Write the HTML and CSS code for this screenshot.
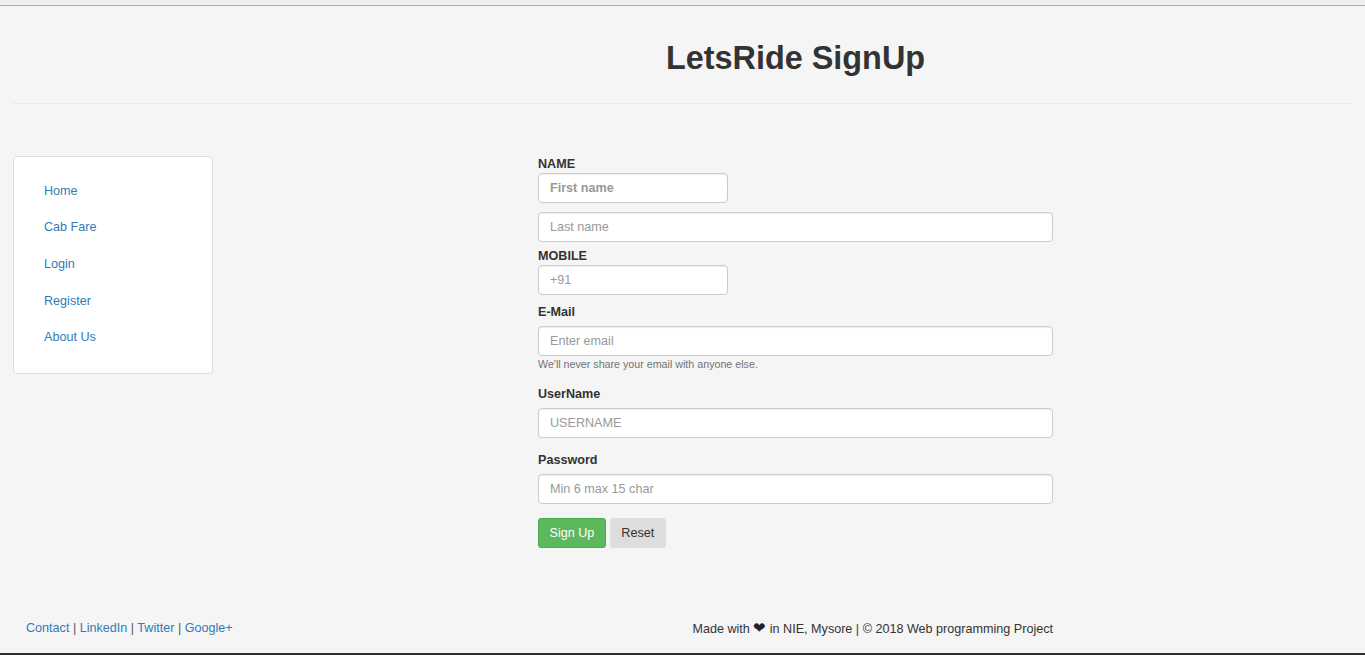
FILE: index.html
```html
<!DOCTYPE html>
<html lang="en">
<head>
<meta charset="utf-8">
<title>LetsRide SignUp</title>
<link rel="stylesheet" href="styles.css">
</head>
<body>
<div class="topbar"></div>
<div class="page">
  <header class="header">
    <div></div>
    <h1 class="title">LetsRide SignUp</h1>
  </header>
  <hr class="rule">
  <main class="main">
    <nav class="sidebar">
      <a class="nav-link" href="#">Home</a>
      <a class="nav-link" href="#">Cab Fare</a>
      <a class="nav-link" href="#">Login</a>
      <a class="nav-link" href="#">Register</a>
      <a class="nav-link" href="#">About Us</a>
    </nav>
    <form class="form">
      <label class="label">NAME</label>
      <input class="input input-short input-bold" type="text" placeholder="First name">
      <input class="input input-gap" type="text" placeholder="Last name">
      <label class="label label-mobile">MOBILE</label>
      <input class="input input-short" type="text" placeholder="+91">
      <label class="label label-email">E-Mail</label>
      <input class="input" type="email" placeholder="Enter email">
      <small class="help">We'll never share your email with anyone else.</small>
      <label class="label label-user">UserName</label>
      <input class="input" type="text" placeholder="USERNAME">
      <label class="label label-pass">Password</label>
      <input class="input" type="password" placeholder="Min 6 max 15 char">
      <div class="buttons">
        <button class="btn btn-success" type="submit">Sign Up</button>
        <button class="btn btn-default" type="reset">Reset</button>
      </div>
    </form>
  </main>
  <footer class="footer">
    <div class="footer-left"><a href="#">Contact</a> | <a href="#">LinkedIn</a> | <a href="#">Twitter</a> | <a href="#">Google+</a></div>
    <div class="footer-right">Made with <span class="heart">&#10084;</span> in NIE, Mysore | &copy; 2018 Web programming Project</div>
  </footer>
</div>
<div class="bottombar"></div>
</body>
</html>
```
FILE: styles.css
```css
* { box-sizing: border-box; }
html, body { margin: 0; padding: 0; }
body {
  background: #f5f5f5;
  font-family: "Liberation Sans", Arial, Helvetica, sans-serif;
  font-size: 12.6px;
  line-height: 20px;
  color: #333;
  height: 655px;
  overflow: hidden;
  display: flex;
  flex-direction: column;
}
.topbar {
  height: 6px;
  background: #f0f0f0;
  border-bottom: 1px solid #ababab;
  flex: none;
}
.page {
  flex: 1;
  display: flex;
  flex-direction: column;
}
.header {
  display: grid;
  grid-template-columns: 525px 515px;
  padding-left: 13px;
  height: 97px;
}
.title {
  margin: 0;
  padding-top: 34px;
  font-size: 32.4px;
  line-height: 36px;
  font-weight: bold;
  text-align: center;
  white-space: nowrap;
  color: #333;
}
.rule {
  margin: 0 13px 0 12px;
  border: 0;
  border-top: 1px solid #ebebeb;
  height: 0;
}
.main {
  display: grid;
  grid-template-columns: 200px 515px;
  column-gap: 325px;
  padding-left: 13px;
  align-items: start;
}
.sidebar {
  margin-top: 52px;
  background: #fff;
  border: 1px solid #ddd;
  border-radius: 4px;
  padding: 14.6px 15px 17.6px;
  display: flex;
  flex-direction: column;
}
.nav-link {
  display: block;
  padding: 11px 15px 9px;
  line-height: 16.7px;
  color: #337ab7;
  text-decoration: none;
}
.form {
  margin-top: 49px;
  display: flex;
  flex-direction: column;
  align-items: flex-start;
}
.label {
  display: block;
  font-weight: bold;
  padding-top: 2px;
  line-height: 18px;
}
.label-mobile { margin-top: 3px; }
.label-email { margin-top: 6px; margin-bottom: 5px; }
.label-user { margin-top: 10px; margin-bottom: 5px; }
.label-pass { margin-top: 11px; margin-bottom: 5px; }
.input {
  display: block;
  width: 515px;
  height: 30px;
  padding: 4px 11px;
  font-family: inherit;
  font-size: 12.6px;
  line-height: 20px;
  color: #555;
  background: #fff;
  border: 1px solid #ccc;
  border-radius: 4px;
  box-shadow: inset 0 1px 1px rgba(0,0,0,0.075);
}
.input::placeholder { color: #999; }
.input-short { width: 190px; }
.input-bold::placeholder { font-weight: bold; }
.input-gap { margin-top: 9px; }
.help {
  display: block;
  margin-top: 0;
  font-size: 10.7px;
  line-height: 17px;
  color: #737373;
}
.buttons {
  margin-top: 14px;
  display: flex;
  gap: 4px;
}
.btn {
  height: 30px;
  padding: 4px 10.5px;
  font-family: inherit;
  font-size: 12.6px;
  line-height: 20px;
  border-radius: 3px;
  border: 1px solid transparent;
}
.btn-success { background: #5cb85c; border-color: #4cae4c; color: #fff; }
.btn-default { background: #ddd; border-color: #ddd; color: #333; }
.footer {
  margin-top: auto;
  display: grid;
  grid-template-columns: 525px 515px;
  padding-left: 13px;
  padding-top: 1px;
  padding-bottom: 14px;
  line-height: 20px;
}
.footer-left { padding-left: 13px; color: #555; }
.footer-left a { color: #337ab7; text-decoration: none; }
.footer-right { text-align: right; color: #333; }
.heart { color: #222; font-size: 14.5px; }
.bottombar {
  height: 2px;
  background: #2b2f33;
  flex: none;
}
```
